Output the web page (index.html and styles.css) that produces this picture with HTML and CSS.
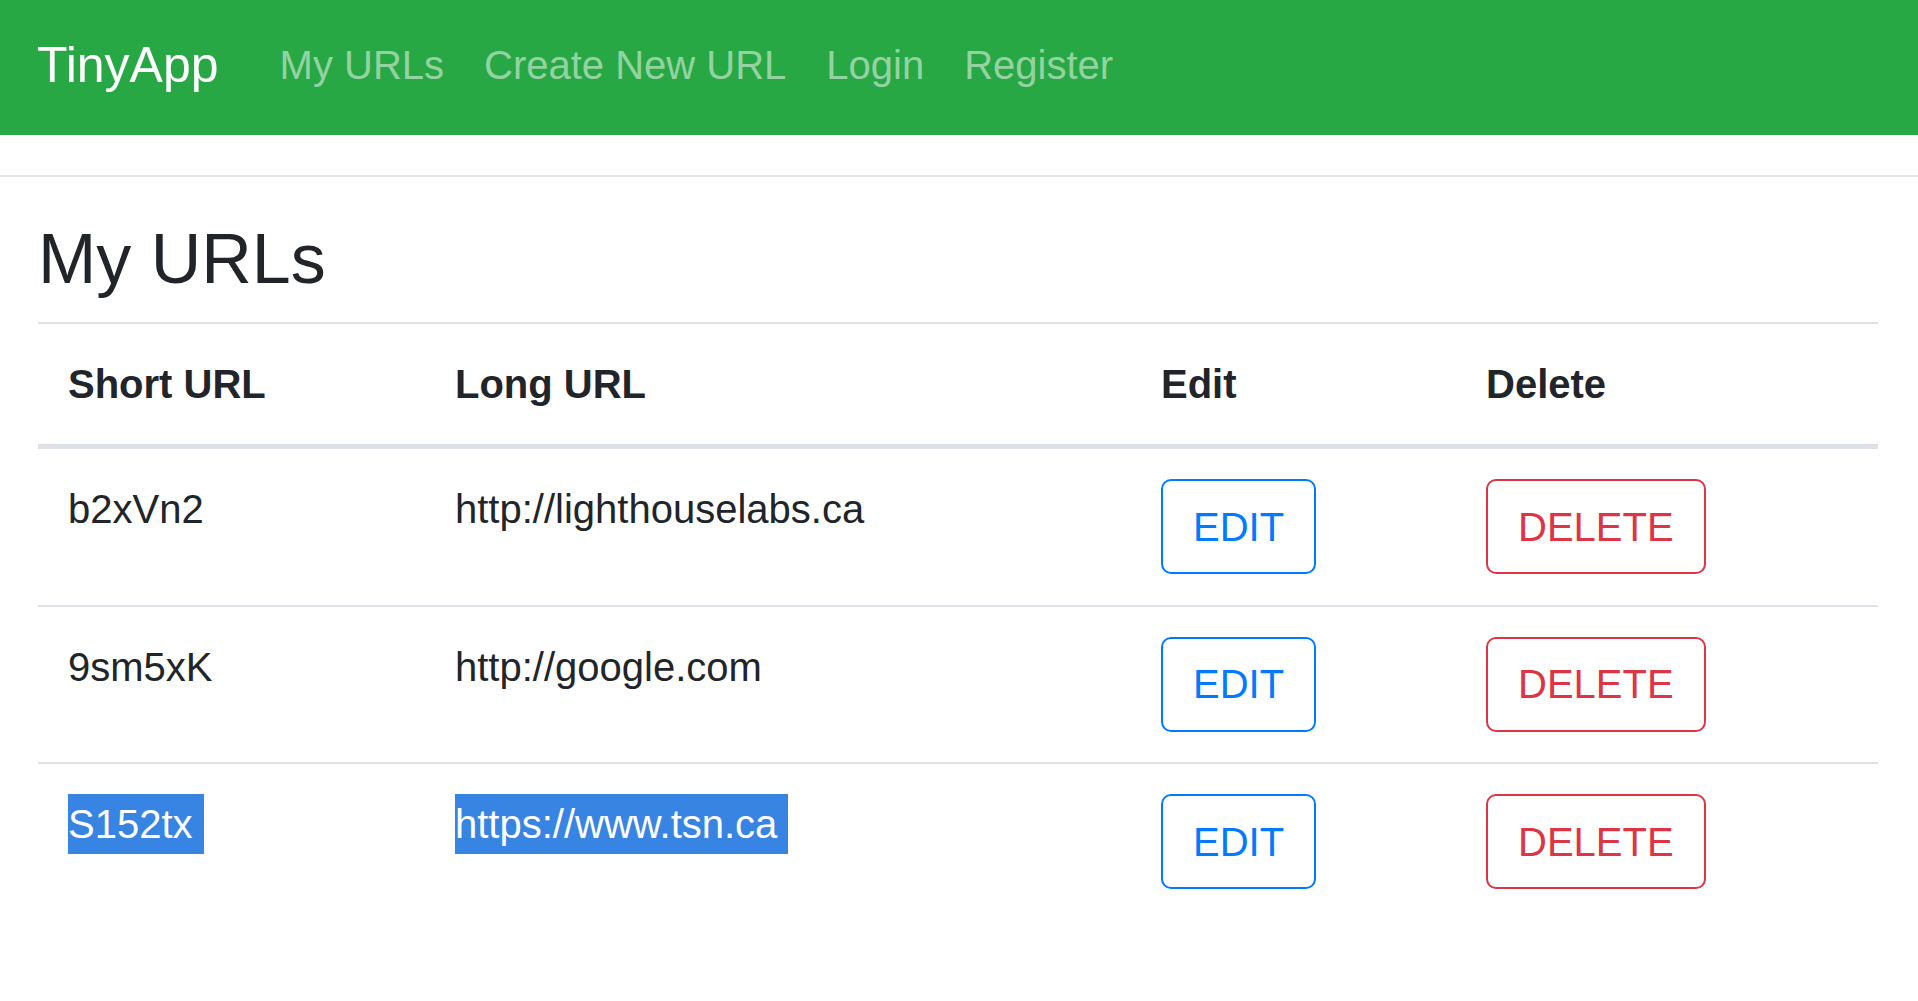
FILE: index.html
```html
<!DOCTYPE html>
<html lang="en">
<head>
<meta charset="utf-8">
<title>TinyApp</title>
<link rel="stylesheet" href="styles.css">
</head>
<body>
<nav class="navbar">
  <a class="brand" href="#">TinyApp</a>
  <div class="nav">
    <a class="nav-link" href="#">My URLs</a>
    <a class="nav-link" href="#">Create New URL</a>
    <a class="nav-link" href="#">Login</a>
    <a class="nav-link" href="#">Register</a>
  </div>
</nav>
<hr class="divider">
<main class="container">
  <h1 class="title">My URLs</h1>
  <table class="table">
    <thead>
      <tr>
        <th class="col-short">Short URL</th>
        <th class="col-long">Long URL</th>
        <th class="col-edit">Edit</th>
        <th class="col-delete">Delete</th>
      </tr>
    </thead>
    <tbody>
      <tr>
        <td>b2xVn2</td>
        <td>http://lighthouselabs.ca</td>
        <td><a class="btn btn-edit" href="#">EDIT</a></td>
        <td><button class="btn btn-delete" type="button">DELETE</button></td>
      </tr>
      <tr>
        <td>9sm5xK</td>
        <td>http://google.com</td>
        <td><a class="btn btn-edit" href="#">EDIT</a></td>
        <td><button class="btn btn-delete" type="button">DELETE</button></td>
      </tr>
      <tr>
        <td><span class="sel">S152tx</span></td>
        <td><span class="sel">https://www.tsn.ca</span></td>
        <td><a class="btn btn-edit" href="#">EDIT</a></td>
        <td><button class="btn btn-delete" type="button">DELETE</button></td>
      </tr>
    </tbody>
  </table>
</main>
</body>
</html>
```

FILE: styles.css
```css
html, body {
  margin: 0;
  padding: 0;
  background: #fff;
}

body {
  font-family: "Liberation Sans", Arial, sans-serif;
  font-size: 40px;
  line-height: 1.5;
  color: #212529;
}

.navbar {
  display: flex;
  align-items: center;
  height: 135px;
  box-sizing: border-box;
  padding: 0 37px 5px 37px;
  background: #28a745;
}

.brand {
  font-size: 50px;
  line-height: 75px;
  color: #fff;
  text-decoration: none;
  margin-right: 41px;
}

.nav {
  display: flex;
}

.nav-link {
  padding: 0 20px;
  line-height: 60px;
  color: rgba(255, 255, 255, 0.5);
  text-decoration: none;
}

.divider {
  margin: 40px 0 40px 0;
  height: 0;
  border: 0;
  border-top: 2px solid rgba(0, 0, 0, 0.1);
}

.container {
  padding: 0 40px 0 38px;
}

.title {
  font-family: "Liberation Sans", Arial, sans-serif;
  font-weight: 400;
  font-size: 70px;
  line-height: 84px;
  margin: 0 0 21px 0;
}

.table {
  width: 100%;
  border-collapse: collapse;
}

.table th,
.table td {
  padding: 30px;
  text-align: left;
  vertical-align: top;
  border-top: 2px solid #dee2e6;
}

.table td {
  padding-bottom: 30.5px;
}

.table thead th {
  font-weight: 700;
  border-bottom: 5px solid #dee2e6;
}

.col-short { width: 327px; }
.col-long { width: 646px; }
.col-edit { width: 265px; }

.btn {
  display: inline-block;
  box-sizing: border-box;
  padding: 15.5px 30px;
  font-family: "Liberation Sans", Arial, sans-serif;
  font-size: 40px;
  line-height: 60px;
  background: transparent;
  border: 2px solid;
  border-radius: 10px;
  text-decoration: none;
  margin: 0;
}

.btn-edit {
  color: #007bff;
  border-color: #007bff;
}

.btn-delete {
  color: #dc3545;
  border-color: #dc3545;
}

.sel {
  display: inline-block;
  background: #3884e3;
  color: #fff;
  padding-right: 11px;
}
```
